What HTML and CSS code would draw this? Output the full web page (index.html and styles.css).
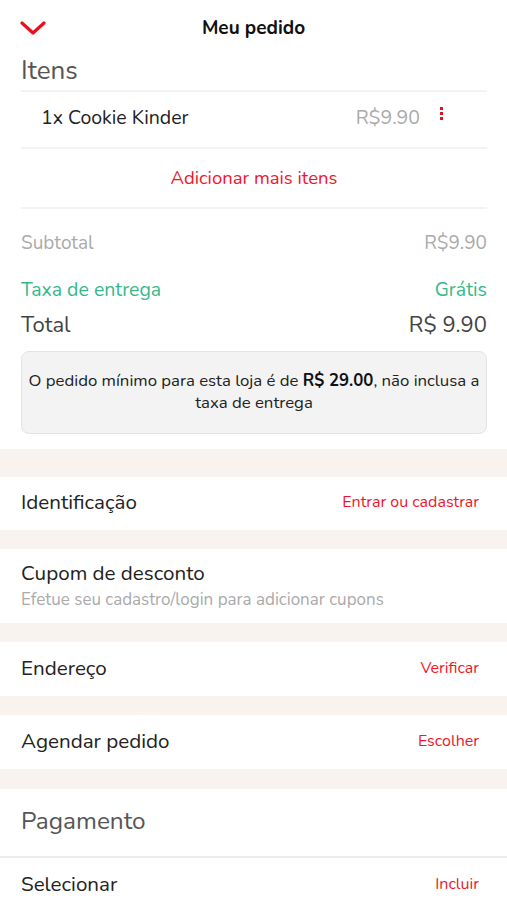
FILE: index.html
```html
<!DOCTYPE html>
<html lang="pt-BR">
<head>
    <meta charset="UTF-8">
    <meta name="viewport" content="width=device-width, initial-scale=1.0">
    <title>Meu pedido</title>
    <link rel="stylesheet" href="styles.css">
</head>
<body>
    <header class="topbar">
        <button class="back" aria-label="Fechar">
            <svg width="26" height="14" viewBox="0 0 26 14"><path d="M2 2 L13 12 L24 2" fill="none" stroke="#e8101f" stroke-width="3.2" stroke-linecap="round" stroke-linejoin="round"/></svg>
        </button>
        <h1>Meu pedido</h1>
    </header>

    <section class="summary">
        <h2 class="section-title">Itens</h2>

        <div class="item">
            <span class="item-name">1x Cookie Kinder</span>
            <span class="item-price">R$9.90</span>
            <span class="kebab"><i></i><i></i><i></i></span>
        </div>

        <div class="add-more">Adicionar mais itens</div>

        <div class="line subtotal"><span>Subtotal</span><span>R$9.90</span></div>
        <div class="line fee"><span>Taxa de entrega</span><span>Grátis</span></div>
        <div class="line total"><span>Total</span><span>R$ 9.90</span></div>

        <div class="notice">
            O pedido mínimo para esta loja é de <b>R$ 29.00</b>, não inclusa a taxa de entrega
        </div>
    </section>

    <div class="gap gap-first"></div>

    <div class="row">
        <span class="row-label">Identificação</span>
        <span class="row-action">Entrar ou cadastrar</span>
    </div>

    <div class="gap"></div>

    <div class="row row-coupon">
        <div>
            <div class="row-label">Cupom de desconto</div>
            <div class="row-hint">Efetue seu cadastro/login para adicionar cupons</div>
        </div>
    </div>

    <div class="gap"></div>

    <div class="row row-tall">
        <span class="row-label">Endereço</span>
        <span class="row-action">Verificar</span>
    </div>

    <div class="gap"></div>

    <div class="row row-tall">
        <span class="row-label">Agendar pedido</span>
        <span class="row-action">Escolher</span>
    </div>

    <div class="gap gap-last"></div>

    <div class="payment-title">Pagamento</div>

    <div class="row row-payment">
        <span class="row-label">Selecionar</span>
        <span class="row-action">Incluir</span>
    </div>
</body>
</html>
```

FILE: styles.css
```css
/* General */
body {
    margin: 0;
    font-family: 'Nunito', 'Lato', sans-serif;
    background-color: #fff;
    color: #222;
    overflow: hidden;
}

/* Header */
.topbar {
    position: relative;
    height: 56px;
    display: flex;
    align-items: center;
    justify-content: center;
}

.topbar h1 {
    margin: 0;
    font-size: 19px;
    font-weight: 700;
    color: #111;
}

.back {
    position: absolute;
    left: 20px;
    top: 21px;
    padding: 0;
    border: none;
    background: none;
    line-height: 0;
}

/* Items & totals */
.summary {
    padding: 0 20px 15px 21px;
}

.section-title {
    margin: 0;
    height: 34px;
    font-size: 26px;
    font-weight: 400;
    color: #555;
    line-height: 30px;
    border-bottom: 2px solid #f3f3f3;
}

.item {
    display: flex;
    align-items: center;
    height: 50px;
    padding: 0 0 5px 20px;
    border-bottom: 2px solid #f3f3f3;
}

.item-name {
    flex: 1;
    font-size: 19.5px;
    color: #222;
}

.item-price {
    font-size: 19.5px;
    color: #aaa;
}

.kebab {
    display: flex;
    flex-direction: column;
    gap: 2px;
    margin: -7px 44px 0 20px;
}

.kebab i {
    width: 3px;
    height: 3px;
    background-color: #e8101f;
}

.add-more {
    height: 58px;
    line-height: 58px;
    text-align: center;
    font-size: 18.5px;
    color: #f0152a;
    border-bottom: 2px solid #f3f3f3;
}

.line {
    display: flex;
    justify-content: space-between;
}

.subtotal {
    margin-top: 21px;
    font-size: 19px;
    color: #aaa;
}

.fee {
    margin-top: 20px;
    font-size: 19.5px;
    color: #35b98a;
}

.total {
    margin-top: 7px;
    font-size: 22px;
    color: #444;
}

.notice {
    margin-top: 11px;
    padding: 18px 4px 19px;
    background-color: #f3f3f3;
    border: 1px solid #e3e3e3;
    border-radius: 8px;
    font-size: 16.8px;
    line-height: 22px;
    text-align: center;
    color: #222;
}

.notice b {
    color: #111;
}

/* Option rows */
.gap {
    height: 19px;
    background-color: #f8f3ef;
}

.gap-first {
    height: 28px;
}

.gap-last {
    height: 20px;
}

.row {
    display: flex;
    align-items: center;
    justify-content: space-between;
    height: 53px;
    padding: 0 28px 0 21px;
}

.row > * {
    margin-bottom: 3px;
}

.row-tall {
    height: 54px;
}

.row-label {
    font-size: 20.6px;
    color: #222;
}

.row-action {
    font-size: 16px;
    color: #f0152a;
}

.row-coupon {
    height: 74px;
}

.row-hint {
    margin-top: 1px;
    font-size: 17px;
    color: #aaa;
}

.payment-title {
    height: 67px;
    line-height: 64px;
    padding-left: 21px;
    font-size: 24.4px;
    color: #555;
    border-bottom: 2px solid #ebebeb;
}

.row-payment {
    height: 54px;
}
```
